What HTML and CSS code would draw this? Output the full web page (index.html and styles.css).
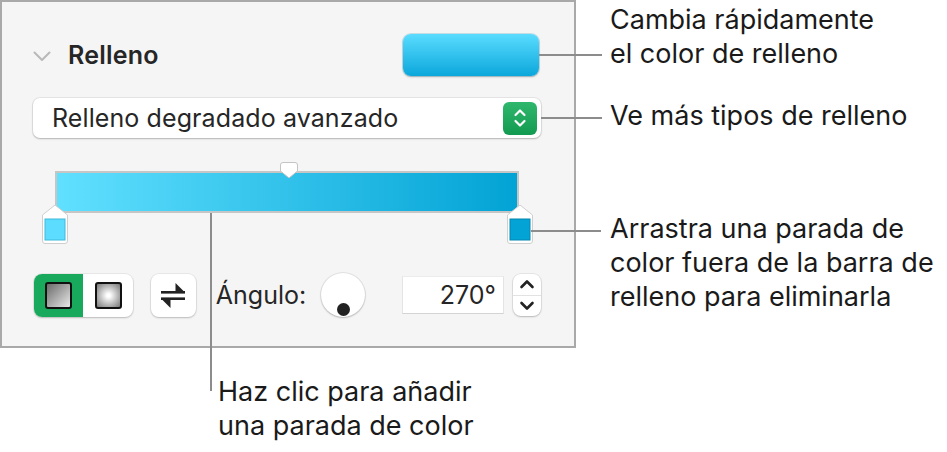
FILE: index.html
```html
<!DOCTYPE html>
<html lang="es">
<head>
  <meta charset="UTF-8" />
  <meta name="viewport" content="width=device-width, initial-scale=1.0"/>
  <title>Relleno degradado avanzado</title>
  <link rel="stylesheet" href="styles.css">
</head>
<body>
  <div class="figure">
    <div class="top">
      <div class="panel">
        <div class="header">
          <svg class="disclosure" width="18" height="11" viewBox="0 0 18 11">
            <path d="M1.5 1.5 L9 9 L16.5 1.5" fill="none" stroke="#b9b9b9" stroke-width="2" stroke-linecap="round" stroke-linejoin="round"/>
          </svg>
          <span class="title">Relleno</span>
          <div class="well"></div>
        </div>

        <div class="dropdown">
          <span class="dropdown-text">Relleno degradado avanzado</span>
          <span class="popup-arrows">
            <svg width="14" height="22" viewBox="0 0 14 22">
              <path d="M2.5 8 L7 3.5 L11.5 8 M2.5 14 L7 18.5 L11.5 14" fill="none" stroke="#fff" stroke-width="2.2" stroke-linecap="round" stroke-linejoin="round"/>
            </svg>
          </span>
        </div>

        <div class="bar-area">
          <svg class="mid-handle" width="20" height="20" viewBox="0 0 20 20">
            <path d="M4 1.5 H16 Q18.5 1.5 18.5 4 V10 L10 17 L1.5 10 V4 Q1.5 1.5 4 1.5 Z" fill="#fff" stroke="#c4c4c4" stroke-width="1"/>
          </svg>
          <div class="bar"></div>
          <svg class="stop stop-left" width="30" height="42" viewBox="0 0 30 42">
            <path d="M15 1 L27.5 11 V37 Q27.5 39.5 25 39.5 H5 Q2.5 39.5 2.5 37 V11 Z" fill="#fff" stroke="#cfcfcf" stroke-width="1"/>
            <rect x="5" y="15" width="20" height="21" fill="#5cdcff" stroke="#3fb9dc" stroke-width="1"/>
          </svg>
          <svg class="stop stop-right" width="30" height="42" viewBox="0 0 30 42">
            <path d="M15 1 L27.5 11 V37 Q27.5 39.5 25 39.5 H5 Q2.5 39.5 2.5 37 V11 Z" fill="#fff" stroke="#cfcfcf" stroke-width="1"/>
            <rect x="5" y="15" width="20" height="21" fill="#03a3d5" stroke="#0586b0" stroke-width="1"/>
          </svg>
          <span class="callout callout-stop"></span>
          <span class="callout callout-bar"></span>
        </div>

        <div class="controls">
          <div class="segmented">
            <span class="seg seg-on"><span class="swatch swatch-linear"></span></span>
            <span class="seg"><span class="swatch swatch-radial"></span></span>
          </div>
          <div class="swap">
            <svg width="24" height="25" viewBox="0 0 24 25">
              <rect x="0" y="8" width="24" height="2.6" fill="#222"/>
              <polygon points="14.5,0 14.5,9 24,9.5" fill="#222"/>
              <rect x="0" y="14.4" width="24" height="2.6" fill="#222"/>
              <polygon points="9.5,25 9.5,16 0,15.5" fill="#222"/>
            </svg>
          </div>
          <span class="angle-label">Ángulo:</span>
          <div class="dial"><span class="dial-dot"></span></div>
          <div class="angle-field">270°</div>
          <div class="stepper">
            <span class="step">
              <svg width="16" height="10" viewBox="0 0 16 10"><path d="M2.5 8 L8 2.5 L13.5 8" fill="none" stroke="#222" stroke-width="2.6" stroke-linecap="round" stroke-linejoin="round"/></svg>
            </span>
            <span class="step">
              <svg width="16" height="10" viewBox="0 0 16 10"><path d="M2.5 2 L8 7.5 L13.5 2" fill="none" stroke="#222" stroke-width="2.6" stroke-linecap="round" stroke-linejoin="round"/></svg>
            </span>
          </div>
        </div>
      </div>

      <div class="notes">
        <p class="note note-well">Cambia rápidamente<br>el color de relleno</p>
        <p class="note note-menu">Ve más tipos de relleno</p>
        <p class="note note-stop">Arrastra una parada de<br>color fuera de la barra de<br>relleno para eliminarla</p>
      </div>
    </div>

    <p class="note note-bar">Haz clic para añadir<br>una parada de color</p>
  </div>
</body>
</html>
```

FILE: styles.css
```css
* {
  box-sizing: border-box;
}
body {
  margin: 0;
  background: #fff;
  font-family: Inter, 'Liberation Sans', sans-serif;
  color: #1c1c1c;
}
.figure {
  width: 947px;
  height: 452px;
}
.top {
  display: flex;
}

/* inspector panel */
.panel {
  position: relative;
  width: 576px;
  height: 348px;
  flex: none;
  background: #f5f5f5;
  border: 2px solid #a9a9a9;
  padding: 32px 33px 0 31px;
  color: #262626;
}
.header {
  display: flex;
  align-items: center;
  height: 42px;
}
.disclosure {
  flex: none;
  margin-top: 2px;
}
.title {
  margin-left: 17px;
  font-size: 25px;
  font-weight: 600;
  letter-spacing: 0.2px;
}
.well {
  position: relative;
  margin-left: auto;
  margin-right: 2px;
  width: 136px;
  height: 42px;
  border-radius: 8px;
  background: linear-gradient(to bottom, #5adcff, #0ba7db);
  box-shadow: 0 0 0 1px rgba(0, 120, 160, 0.18), 0 1px 2px rgba(0, 0, 0, 0.25);
}
.well::after {
  content: "";
  position: absolute;
  left: 100%;
  top: 20px;
  width: 63px;
  height: 2px;
  background: #8c8c8c;
}
.dropdown {
  position: relative;
  display: flex;
  align-items: center;
  margin-top: 22px;
  height: 40px;
  background: #fff;
  border-radius: 7px;
  box-shadow: 0 0 0 1px rgba(0, 0, 0, 0.06), 0 1px 2px rgba(0, 0, 0, 0.22);
  padding: 0 4px 0 19px;
}
.dropdown::after {
  content: "";
  position: absolute;
  left: 100%;
  top: 19px;
  width: 61px;
  height: 2px;
  background: #8c8c8c;
}
.dropdown-text {
  font-size: 25px;
  letter-spacing: 0.1px;
}
.popup-arrows {
  margin-left: auto;
  width: 34px;
  height: 33px;
  border-radius: 6px;
  background: linear-gradient(to bottom, #2fb86d, #119a50);
  display: flex;
  align-items: center;
  justify-content: center;
}

/* gradient bar */
.bar-area {
  position: relative;
  margin-top: 24px;
  height: 81px;
  padding-top: 9px;
}
.bar {
  margin-left: 22px;
  width: 464px;
  height: 42px;
  border: 2px solid #c6c6c6;
  background: linear-gradient(to right, #61e0ff, #02a3d5);
}
.mid-handle {
  position: absolute;
  left: 246px;
  top: -1px;
}
.stop {
  position: absolute;
  top: 42px;
}
.stop-left {
  left: 7px;
}
.stop-right {
  left: 472px;
}
.callout {
  position: absolute;
  background: #8c8c8c;
}
.callout-stop {
  left: 498px;
  top: 68px;
  width: 70px;
  height: 2px;
}
.callout-bar {
  left: 177px;
  top: 51px;
  width: 2px;
  height: 178px;
}

/* bottom controls */
.controls {
  display: flex;
  align-items: center;
  margin-top: 29px;
  height: 46px;
}
.segmented {
  display: flex;
  margin-left: 1px;
  width: 99px;
  height: 43px;
  border-radius: 8px;
  overflow: hidden;
  background: #fff;
  box-shadow: 0 0 0 1px rgba(0, 0, 0, 0.05), 0 1px 2px rgba(0, 0, 0, 0.2);
}
.seg {
  flex: 1;
  display: flex;
  align-items: center;
  justify-content: center;
}
.seg-on {
  background: #19a95c;
}
.swatch {
  width: 27px;
  height: 27px;
  border: 2.5px solid #111;
  border-radius: 3px;
}
.swatch-linear {
  background: linear-gradient(135deg, #6a6a6a, #e9e9e9);
}
.swatch-radial {
  background: radial-gradient(circle, #fff 10%, #777 100%);
}
.swap {
  margin-left: 18px;
  width: 45px;
  height: 43px;
  border-radius: 8px;
  background: #fff;
  box-shadow: 0 0 0 1px rgba(0, 0, 0, 0.05), 0 1px 2px rgba(0, 0, 0, 0.2);
  display: flex;
  align-items: center;
  justify-content: center;
}
.angle-label {
  margin-left: 20px;
  font-size: 25px;
}
.dial {
  position: relative;
  margin-left: 15px;
  width: 44px;
  height: 44px;
  border-radius: 50%;
  background: #fff;
  box-shadow: 0 0 0 1px rgba(0, 0, 0, 0.07), 0 1px 2px rgba(0, 0, 0, 0.2);
}
.dial-dot {
  position: absolute;
  left: 16px;
  bottom: 1px;
  width: 13px;
  height: 13px;
  border-radius: 50%;
  background: #222;
}
.angle-field {
  margin-left: 37px;
  width: 102px;
  height: 38px;
  background: #fff;
  border: 1px solid #e4e4e4;
  border-top-color: #ececec;
  border-bottom-color: #d4d4d4;
  text-align: right;
  padding-right: 7px;
  font-size: 25px;
  line-height: 36px;
}
.stepper {
  display: flex;
  flex-direction: column;
  margin-left: 9px;
  width: 28px;
  height: 42px;
  border-radius: 8px;
  background: #fff;
  box-shadow: 0 0 0 1px rgba(0, 0, 0, 0.06), 0 1px 2px rgba(0, 0, 0, 0.2);
}
.step {
  flex: 1;
  display: flex;
  align-items: center;
  justify-content: center;
}
.step + .step {
  border-top: 1px solid #e2e2e2;
}

/* annotations */
.notes {
  padding-left: 34px;
}
.note {
  margin: 0;
  font-size: 27px;
  line-height: 34px;
  color: #1a1a1a;
  white-space: nowrap;
}
.note-well {
  margin-top: 3px;
}
.note-menu {
  margin-top: 28px;
}
.note-stop {
  margin-top: 79px;
}
.note-bar {
  margin-top: 27px;
  margin-left: 218px;
}
```
